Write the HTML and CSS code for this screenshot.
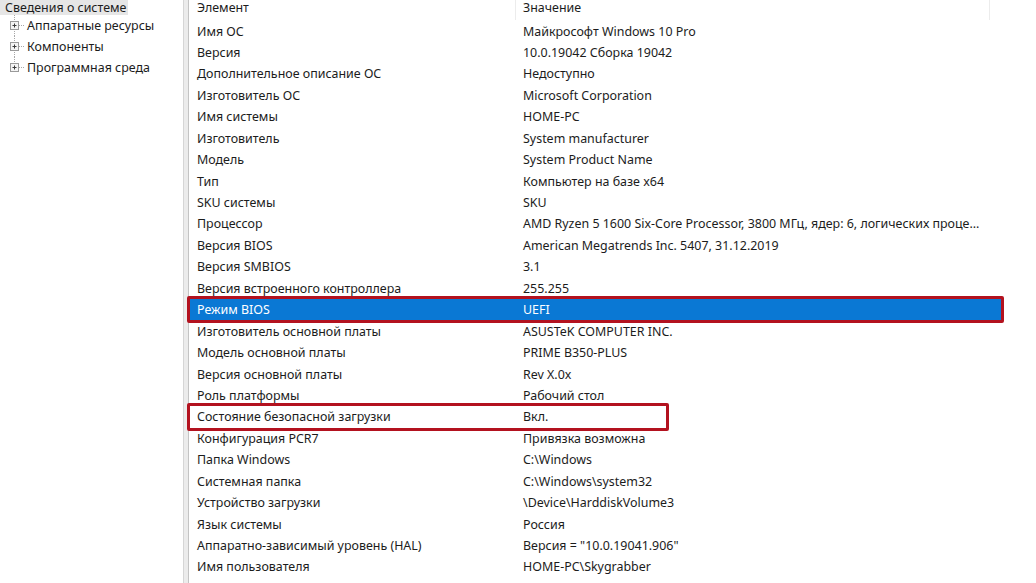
FILE: index.html
```html
<!DOCTYPE html>
<html lang="ru">
<head>
  <meta charset="UTF-8">
  <title>Сведения о системе</title>
  <link rel="stylesheet" href="styles.css">
</head>
<body>
  <div class="window">
    <!-- Дерево категорий слева -->
    <div class="tree">
      <div class="root"><span class="root-label">Сведения о системе</span></div>
      <div class="node">
        <svg class="twist" width="20" height="21" viewBox="0 0 20 21">
          <line x1="7.5" y1="0" x2="7.5" y2="21" class="dots"/>
          <line x1="12" y1="10.5" x2="18" y2="10.5" class="dots"/>
          <rect x="3.5" y="6.5" width="8" height="8" class="box"/>
          <path d="M5.5 10.5h4M7.5 8.5v4" class="sign"/>
        </svg>
        Аппаратные ресурсы
      </div>
      <div class="node">
        <svg class="twist" width="20" height="21" viewBox="0 0 20 21">
          <line x1="7.5" y1="0" x2="7.5" y2="21" class="dots"/>
          <line x1="12" y1="10.5" x2="18" y2="10.5" class="dots"/>
          <rect x="3.5" y="6.5" width="8" height="8" class="box"/>
          <path d="M5.5 10.5h4M7.5 8.5v4" class="sign"/>
        </svg>
        Компоненты
      </div>
      <div class="node">
        <svg class="twist" width="20" height="21" viewBox="0 0 20 21">
          <line x1="7.5" y1="0" x2="7.5" y2="7" class="dots"/>
          <line x1="12" y1="10.5" x2="18" y2="10.5" class="dots"/>
          <rect x="3.5" y="6.5" width="8" height="8" class="box"/>
          <path d="M5.5 10.5h4M7.5 8.5v4" class="sign"/>
        </svg>
        Программная среда
      </div>
    </div>

    <div class="splitter"></div>

    <!-- Таблица сведений -->
    <div class="list">
      <div class="head">
        <div class="th">Элемент</div>
        <div class="th">Значение</div>
      </div>
      <div class="row"><div>Имя ОС</div><div>Майкрософт Windows 10 Pro</div></div>
      <div class="row"><div>Версия</div><div>10.0.19042 Сборка 19042</div></div>
      <div class="row"><div>Дополнительное описание ОС</div><div>Недоступно</div></div>
      <div class="row"><div>Изготовитель ОС</div><div>Microsoft Corporation</div></div>
      <div class="row"><div>Имя системы</div><div>HOME-PC</div></div>
      <div class="row"><div>Изготовитель</div><div>System manufacturer</div></div>
      <div class="row"><div>Модель</div><div>System Product Name</div></div>
      <div class="row"><div>Тип</div><div>Компьютер на базе x64</div></div>
      <div class="row"><div>SKU системы</div><div>SKU</div></div>
      <div class="row"><div>Процессор</div><div>AMD Ryzen 5 1600 Six-Core Processor, 3800 МГц, ядер: 6, логических проце...</div></div>
      <div class="row"><div>Версия BIOS</div><div>American Megatrends Inc. 5407, 31.12.2019</div></div>
      <div class="row"><div>Версия SMBIOS</div><div>3.1</div></div>
      <div class="row"><div>Версия встроенного контроллера</div><div>255.255</div></div>
      <div class="row selected mark-wide"><div>Режим BIOS</div><div>UEFI</div></div>
      <div class="row"><div>Изготовитель основной платы</div><div>ASUSTeK COMPUTER INC.</div></div>
      <div class="row"><div>Модель основной платы</div><div>PRIME B350-PLUS</div></div>
      <div class="row"><div>Версия основной платы</div><div>Rev X.0x</div></div>
      <div class="row"><div>Роль платформы</div><div>Рабочий стол</div></div>
      <div class="row mark-short"><div>Состояние безопасной загрузки</div><div>Вкл.</div></div>
      <div class="row"><div>Конфигурация PCR7</div><div>Привязка возможна</div></div>
      <div class="row"><div>Папка Windows</div><div>C:\Windows</div></div>
      <div class="row"><div>Системная папка</div><div>C:\Windows\system32</div></div>
      <div class="row"><div>Устройство загрузки</div><div>\Device\HarddiskVolume3</div></div>
      <div class="row"><div>Язык системы</div><div>Россия</div></div>
      <div class="row"><div>Аппаратно-зависимый уровень (HAL)</div><div>Версия = "10.0.19041.906"</div></div>
      <div class="row"><div>Имя пользователя</div><div>HOME-PC\Skygrabber</div></div>
    </div>
  </div>
</body>
</html>
```

FILE: styles.css
```css
body {
  margin: 0;
  background: #fff;
  color: #1c1c1c;
  font-family: "Noto Sans", "Open Sans", sans-serif;
  font-size: 12.45px;
  overflow: hidden;
}
.window {
  display: flex;
  height: 583px;
}

/* левая панель */
.tree {
  width: 183px;
  flex: none;
}
.root {
  height: 15px;
  line-height: 15px;
}
.root-label {
  display: inline-block;
  padding: 0 2px 0 5px;
  background: #e6e6e6;
}
.node {
  display: flex;
  align-items: center;
  height: 21px;
  padding-left: 7px;
}
.twist {
  flex: none;
}
.twist .dots {
  stroke: #a8a8a8;
  stroke-width: 1;
  stroke-dasharray: 1 1;
}
.twist .box {
  fill: #f4f4f4;
  stroke: #9a9a9a;
  stroke-width: 1;
}
.twist .sign {
  stroke: #3a3a3a;
  stroke-width: 1;
  fill: none;
}

.splitter {
  width: 6px;
  flex: none;
  background: #ececec;
  border-left: 1px solid #d6d6d6;
  border-right: 1px solid #c4c4c4;
  box-sizing: border-box;
}

/* таблица */
.list {
  flex: 1;
  padding-left: 1px;
}
.head,
.row {
  display: grid;
  grid-template-columns: 326px 474px;
  white-space: nowrap;
}
.head {
  height: 20.3px;
}
.th {
  padding-left: 7px;
  border-right: 1px solid #ececec;
  line-height: 15px;
}
.row {
  height: 21.44px;
  align-items: center;
  position: relative;
}
.row > div {
  padding-left: 7px;
  overflow: hidden;
}
.row.selected {
  width: 811px;
  grid-template-columns: 326px 485px;
  background: #0a78d4;
  color: #fff;
}

/* красные рамки поверх строк */
.mark-wide::after,
.mark-short::after {
  content: "";
  position: absolute;
  top: -3px;
  bottom: -3px;
  left: -3px;
  border: 3px solid #b3121f;
  border-radius: 2px;
}
.mark-wide::after {
  right: -3px;
}
.mark-short::after {
  width: 476px;
}
```
